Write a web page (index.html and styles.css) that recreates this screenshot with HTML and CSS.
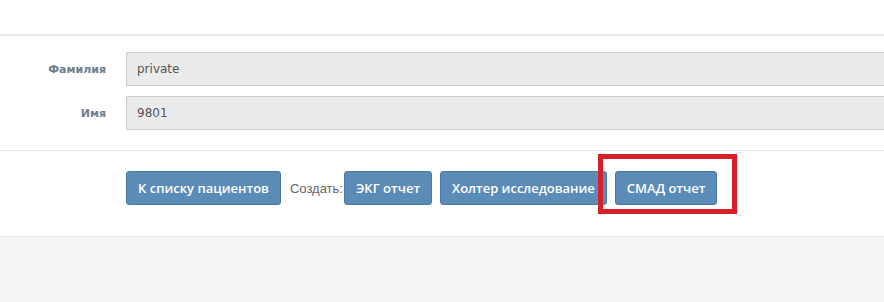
FILE: index.html
```html
<!DOCTYPE html>
<html lang="ru">
<head>
  <meta charset="UTF-8" />
  <title>Пациент</title>
  <link rel="stylesheet" href="styles.css">
</head>
<body>
  <div class="top-bar"></div>

  <div class="patient-form">
    <div class="form-row">
      <label class="form-label">Фамилия</label>
      <input class="form-input" type="text" value="private" readonly />
    </div>
    <div class="form-row">
      <label class="form-label">Имя</label>
      <input class="form-input" type="text" value="9801" readonly />
    </div>
  </div>

  <div class="actions">
    <button class="btn btn-back">К списку пациентов</button>
    <span class="create-label">Создать:</span>
    <button class="btn btn-ecg">ЭКГ отчет</button>
    <button class="btn btn-holter">Холтер исследование</button>
    <span class="highlight-wrap">
      <button class="btn">СМАД отчет</button>
      <span class="highlight"></span>
    </span>
  </div>

  <div class="footer"></div>
</body>
</html>
```

FILE: styles.css
```css
* {
  margin: 0;
  padding: 0;
  box-sizing: border-box;
}

html, body {
  overflow: hidden;
}

body {
  background: #ffffff;
  font-family: "DejaVu Sans", Verdana, sans-serif;
  height: 302px;
  display: flex;
  flex-direction: column;
}

.top-bar {
  height: 36px;
  border-bottom: 2px solid #e9e9e9;
}

.patient-form {
  padding: 16px 0 20px;
  margin-right: -40px;
  display: flex;
  flex-direction: column;
  gap: 10px;
}

.form-row {
  display: grid;
  grid-template-columns: 106px 1fr;
  column-gap: 20px;
  align-items: center;
}

.form-label {
  text-align: right;
  font-size: 11px;
  font-weight: bold;
  color: #6d7d8f;
}

.form-input {
  height: 34px;
  padding: 0 10px;
  background: #ebebeb;
  border: 1px solid #cdcdcd;
  font-family: "DejaVu Sans", Verdana, sans-serif;
  font-size: 12px;
  color: #555555;
  outline: none;
}

.actions {
  border-top: 1px solid #e6e6e6;
  border-bottom: 1px solid #e6e6e6;
  padding: 20px 0 31px 126px;
  display: flex;
  align-items: center;
}

.btn {
  height: 34px;
  padding: 0 11px;
  background: #5b8cb7;
  border: 1px solid #4a78a0;
  border-radius: 3px;
  color: #ffffff;
  font-family: "Open Sans", sans-serif;
  font-size: 13px;
  font-weight: 600;
  cursor: pointer;
}

.create-label {
  margin: 0 1px 0 9px;
  font-family: "Liberation Sans", Arial, sans-serif;
  font-size: 13px;
  color: #666666;
}

.btn-holter {
  margin: 0 8px;
}

.highlight-wrap {
  position: relative;
  display: inline-flex;
}

.highlight {
  position: absolute;
  left: -17px;
  top: -17px;
  width: 139px;
  height: 60px;
  border: 5px solid #d8202a;
}

.footer {
  flex: 1;
  background: #f5f5f5;
}
```
